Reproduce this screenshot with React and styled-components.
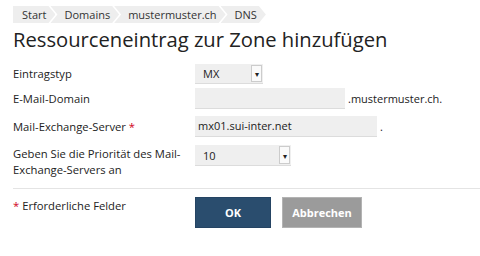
import React from "react";
import styled, { createGlobalStyle } from "styled-components";

const Global = createGlobalStyle`
	body {
		margin: 0;
		background: #fff;
		font-family: "Open Sans", "Liberation Sans", sans-serif;
		color: #222;
	}
`;

const crumbs = ["Start", "Domains", "mustermuster.ch", "DNS"];

export default function App() {
	return (
		<Page>
			<Global />
			<Crumbs>
				{crumbs.map((c, i) => (
					<Crumb key={i} first={i === 0}>{c}</Crumb>
				))}
			</Crumbs>
			<Title>Ressourceneintrag zur Zone hinzufügen</Title>
			<Row space={4}>
				<Label>Eintragstyp</Label>
				<Select width={68} height={20}>
					<span>MX</span>
					<Arrow>▾</Arrow>
				</Select>
			</Row>
			<Row space={7}>
				<Label>E-Mail-Domain</Label>
				<Field>
					<Input width={150} />
					<Suffix>.mustermuster.ch.</Suffix>
				</Field>
			</Row>
			<Row space={8}>
				<Label>
					Mail-Exchange-Server <Star>*</Star>
				</Label>
				<Field>
					<Input width={182}>mx01.sui-inter.net</Input>
					<Suffix>.</Suffix>
				</Field>
			</Row>
			<Row tall>
				<Label pad>Geben Sie die Priorität des Mail-Exchange-Servers an</Label>
				<Select width={96} height={21}>
					<span>10</span>
					<Arrow>▾</Arrow>
				</Select>
			</Row>
			<Divider />
			<Footer>
				<Label pad>
					<Star>*</Star> Erforderliche Felder
				</Label>
				<Buttons>
					<Button primary>OK</Button>
					<Button>Abbrechen</Button>
				</Buttons>
			</Footer>
		</Page>
	);
}

const Page = styled.div`
	width: 480px;
	height: 256px;
	overflow: hidden;
	padding: 6px 0 0 13px;
	box-sizing: border-box;
`;

const Crumbs = styled.div`
	display: flex;
	height: 17px;
`;

const Crumb = styled.div`
	display: flex;
	align-items: center;
	background: #eeeeee;
	font-size: 11px;
	color: #333;
	padding: 0 9px 0 ${(p) => (p.first ? "9px" : "14px")};
	clip-path: polygon(
		0 0,
		calc(100% - 7px) 0,
		100% 50%,
		calc(100% - 7px) 100%,
		0 100%,
		${(p) => (p.first ? "0 0" : "7px 50%")}
	);
	margin-right: -5px;
`;

const Title = styled.h1`
	margin: 3px 0 12px;
	font-weight: 400;
	font-size: 20.2px;
	line-height: 26px;
	color: #222;
`;

const Row = styled.div`
	display: flex;
	align-items: ${(p) => (p.tall ? "flex-start" : "center")};
	margin-bottom: ${(p) => p.space || 0}px;
`;

const Label = styled.div`
	width: 182px;
	font-size: 11.25px;
	line-height: 16px;
	color: #222;
	padding-top: ${(p) => (p.pad ? "1px" : "0")};
`;

const Field = styled.div`
	display: flex;
	align-items: center;
`;

const Input = styled.div`
	width: ${(p) => p.width}px;
	height: 21px;
	box-sizing: border-box;
	background: #efefef;
	border-bottom: 1px solid #dcdcdc;
	font-size: 11px;
	line-height: 20px;
	padding-left: 3px;
	color: #222;
`;

const Suffix = styled.span`
	font-size: 11px;
	margin-left: 3px;
	color: #222;
`;

const Select = styled.div`
	width: ${(p) => p.width}px;
	height: ${(p) => p.height}px;
	box-sizing: border-box;
	display: flex;
	align-items: center;
	justify-content: space-between;
	background: #efefef;
	border-bottom: 1px solid #dcdcdc;
	font-size: 11px;
	padding-left: 8px;
	color: #222;
`;

const Arrow = styled.span`
	width: 11px;
	height: calc(100% - 2px);
	box-sizing: border-box;
	border: 1px solid #ccc;
	background: #fafafa;
	font-size: 8px;
	display: flex;
	align-items: center;
	justify-content: center;
	margin-right: 1px;
`;

const Star = styled.span`
	color: #d0021b;
`;

const Divider = styled.div`
	height: 1px;
	background: #e4e4e4;
	margin: 10px 0 8px;
`;

const Footer = styled.div`
	display: flex;
	align-items: flex-start;
`;

const Buttons = styled.div`
	display: flex;
	gap: 11px;
`;

const Button = styled.div`
	width: ${(p) => (p.primary ? "76px" : "80px")};
	height: 31px;
	display: flex;
	align-items: center;
	justify-content: center;
	font-size: 11px;
	font-weight: 700;
	color: #fff;
	background: ${(p) => (p.primary ? "#2a4d6e" : "#9b9b9b")};
	border: 1px solid ${(p) => (p.primary ? "#254463" : "#b3b3b3")};
	box-sizing: border-box;
`;
